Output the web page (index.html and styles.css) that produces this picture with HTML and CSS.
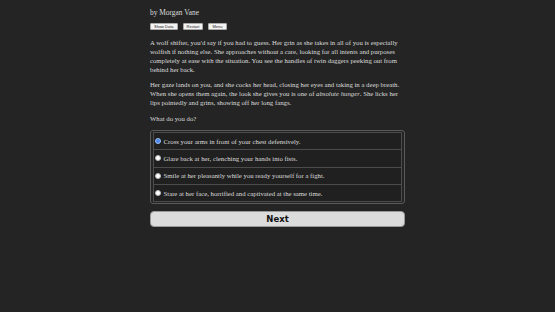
FILE: index.html
```html
<!DOCTYPE html>
<html lang="en">
<head>
    <meta charset="UTF-8">
    <meta name="viewport" content="width=device-width, initial-scale=1.0">
    <title>Chapter</title>
    <link rel="stylesheet" href="styles.css">
</head>
<body>
    <div class="page">
        <div class="byline">by Morgan Vane</div>
        <div class="toolbar">
            <button class="tool">Show Data</button>
            <button class="tool">Restart</button>
            <button class="tool">Menu</button>
        </div>
        <div class="story">
            <p>A wolf shifter, you'd say if you had to guess. Her grin as she takes in all of you is especially wolfish if nothing else. She approaches without a care, looking for all intents and purposes completely at ease with the situation. You see the handles of twin daggers peeking out from behind her back.</p>
            <p>Her gaze lands on you, and she cocks her head, closing her eyes and taking in a deep breath. When she opens them again, the look she gives you is one of <i>absolute hunger</i>. She licks her lips pointedly and grins, showing off her long fangs.</p>
            <p>What do you do?</p>
        </div>
        <form class="choices">
            <label class="option"><span class="radio radio--checked"></span>Cross your arms in front of your chest defensively.</label>
            <label class="option"><span class="radio"></span>Glare back at her, clenching your hands into fists.</label>
            <label class="option"><span class="radio"></span>Smile at her pleasantly while you ready yourself for a fight.</label>
            <label class="option"><span class="radio"></span>Stare at her face, horrified and captivated at the same time.</label>
        </form>
        <button class="next">Next</button>
    </div>
</body>
</html>
```

FILE: styles.css
```css
body {
    margin: 0;
    background-color: #242424;
    color: #dcdcdc;
    font-family: 'Liberation Serif', 'Times New Roman', serif;
}

.page {
    width: 255px;
    margin: 0 auto;
    padding-top: 8px;
}

.byline {
    font-size: 7.4px;
    line-height: 10px;
}

.toolbar {
    display: flex;
    gap: 5px;
    margin-top: 5px;
}

.tool {
    height: 7px;
    padding: 0 3px;
    font-family: 'Liberation Sans', Arial, sans-serif;
    font-size: 4px;
    line-height: 5px;
    color: #222;
    background: #f4f4f4;
    border: 1px solid #aaa;
    border-radius: 1px;
}

.story {
    margin-top: 7.5px;
    font-size: 6.75px;
    line-height: 9px;
}

.story p {
    margin: 0 0 6.5px;
}

.choices {
    margin-top: 7.5px;
    border: 1px solid #5a5a5a;
    border-radius: 3px;
    padding: 1px 2px;
}

.option {
    display: flex;
    align-items: center;
    gap: 2.5px;
    height: 16.3px;
    padding-left: 1px;
    font-size: 6.75px;
    border: 1px solid #4c4c4c;
    margin-top: -1px;
    background: #202020;
}

.option:first-child {
    margin-top: 0;
}

.radio {
    width: 4px;
    height: 4px;
    border-radius: 50%;
    background: #fff;
    border: 0.5px solid #bbb;
}

.radio--checked {
    background: #4a86e8;
    border-color: #9cc0f5;
}

.next {
    display: block;
    width: 100%;
    height: 16px;
    margin-top: 7px;
    padding: 0;
    font-family: 'DejaVu Sans', Verdana, sans-serif;
    font-weight: bold;
    font-size: 8.5px;
    color: #111;
    background: #dcdcdc;
    border: 1px solid #999;
    border-radius: 4px;
}
```
